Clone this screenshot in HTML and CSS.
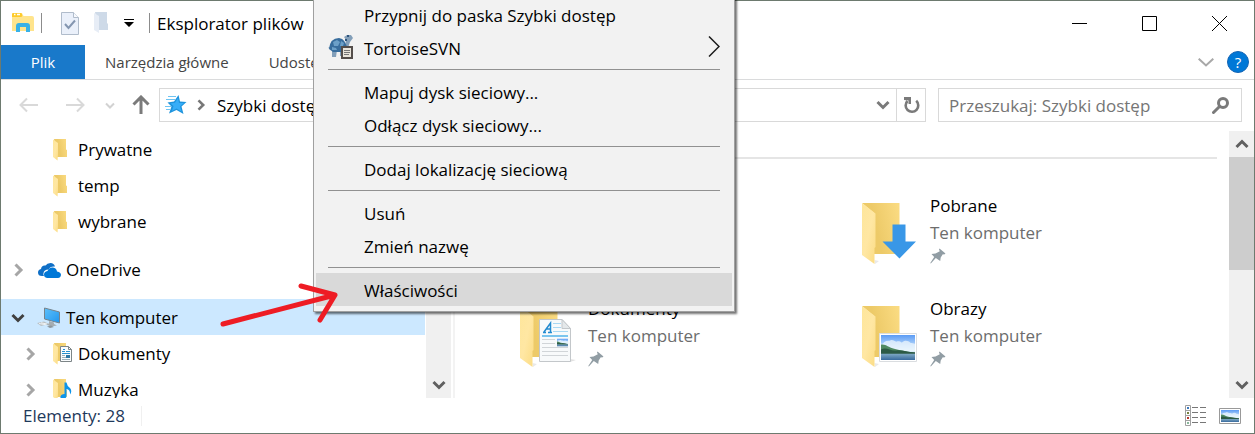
FILE: index.html
```html
<!DOCTYPE html>
<html lang="pl">
<head>
<meta charset="utf-8">
<title>Eksplorator plików</title>
<link rel="stylesheet" href="styles.css">
</head>
<body>
<svg class="defs" width="0" height="0" aria-hidden="true">
  <defs>
    <linearGradient id="g-back" x1="0" x2="1" y1="0.3" y2="0"><stop offset="0.3" stop-color="#edca68"/><stop offset="1" stop-color="#fbdc83"/></linearGradient>
    <linearGradient id="g-front" x1="0" x2="1" y1="0" y2="1"><stop offset="0" stop-color="#fee69b"/><stop offset="0.5" stop-color="#ffe7a3"/><stop offset="1" stop-color="#fbdc84"/></linearGradient>
    <linearGradient id="g-sky" x1="0" x2="0" y1="0" y2="1"><stop offset="0" stop-color="#5b9bf5"/><stop offset="0.6" stop-color="#d8eefb"/></linearGradient>
    <linearGradient id="g-sea" x1="0" x2="0" y1="0" y2="1"><stop offset="0" stop-color="#7fa9c4"/><stop offset="1" stop-color="#386a9d"/></linearGradient>
    <linearGradient id="g-screen" x1="0" x2="1" y1="0" y2="1"><stop offset="0" stop-color="#5dc0fb"/><stop offset="1" stop-color="#2196ee"/></linearGradient>
    <symbol id="folder-small" viewBox="0 0 14 22">
      <path d="M1 0H13V10.500L14 11V18H4Z" fill="url(#g-back)"/>
      <path d="M0 0.500 5 4V15L4.500 21.500 0 18Z" fill="url(#g-front)"/>
    </symbol>
    <symbol id="folder-big" viewBox="0 0 38 62">
      <path d="M0 0H37.500V51H12V10Z" fill="url(#g-back)"/>
      <path d="M12.500 57 17 58 13 61Z" fill="#e9e9e9"/>
      <path d="M0 0 13.500 10.500V44L12.500 45V61L0 52Z" fill="url(#g-front)"/>
    </symbol>
    <symbol id="landscape" viewBox="0 0 36 26" preserveAspectRatio="none">
      <path d="M0 0H36V26H0Z" fill="url(#g-sky)"/>
      <path d="M2 9c2-3 5-3 7-3 2-2 6 0 7 1 3-1 5 0 6 1 3-3 7-2 9 0l5 1v8H0V9Z" fill="#eef7fd" opacity=".75"/>
      <path d="M0 10C5 9 8 13 13 14S24 17 36 18.500V20H0Z" fill="#4f8a62"/>
      <path d="M0 15C6 12 10 17 16 16S28 18 36 18V20H0Z" fill="#2c5a45"/>
      <path d="M0 19.500H36V26H0Z" fill="url(#g-sea)"/>
    </symbol>
    <symbol id="pin" viewBox="0 0 16 16">
      <path d="M9.500 0.500 15.500 5.500 14.200 6.500 12.800 6.300 10.700 9.500 10.200 13 5.800 9.900 0.800 15.600 0.300 15.100 4.200 9 1.500 6 5.500 5.600 9.800 3.200 9 1.500Z" fill="#919da4"/>
    </symbol>
    <symbol id="chev-right" viewBox="0 0 10 14"><path d="M1.500 1.500 7 7 1.500 12.500" fill="none" stroke="currentColor" stroke-width="3"/></symbol>
    <symbol id="chev-down" viewBox="0 0 14 10"><path d="M1.500 2 7 7.500 12.500 2" fill="none" stroke="currentColor" stroke-width="3"/></symbol>
  </defs>
</svg>

<div class="window">
  <header class="titlebar">
    <div class="quick-access">
      <svg class="app-icon" width="22" height="20" viewBox="0 0 22 20"><path d="M0 2H10L12 3H20Q22 3 22 5V18H0Z" fill="#ffe48c"/><path d="M1 0H9Q10.500 0 10.500 2T9 4H0V1Q0 0 1 0Z" fill="#fecb2b"/><path d="M2 1.500H3.500M5 1.500H8" stroke="#fff" stroke-width="1.500"/><path d="M4 19V13Q4 10 7 10H15Q18 10 18 13V19H14V14H8V19Z" fill="#38b1e7"/></svg>
      <span class="divider"></span>
      <button class="tool" aria-label="Właściwości folderu"><svg width="18" height="23" viewBox="0 0 18 23"><path d="M.5.500H12.500L17.500 5.500V22.500H.5Z" fill="#eaf0fa" stroke="#b0bccb"/><path d="M12.500.500V5.500H17.500" fill="#f7f9fd" stroke="#b0bccb"/><path d="M4 12 7.500 16 14 8.500" fill="none" stroke="#8496b0" stroke-width="2"/></svg></button>
      <button class="tool tool-folder" aria-label="Nowy folder"><svg width="15" height="22" viewBox="0 0 15 22"><path d="M1 0H13V11L14 12V18H4Z" fill="#cedae8"/><path d="M0 1 5 4V21L0 18Z" fill="#e7edf6"/></svg></button>
      <button class="tool" aria-label="Dostosuj pasek"><svg width="10" height="8" viewBox="0 0 10 8"><path d="M0 0H10V1H0ZM0 3H10L5 8Z"/></svg></button>
      <span class="divider"></span>
    </div>
    <h1 class="title">Eksplorator plików</h1>
    <div class="window-buttons">
      <button aria-label="Minimalizuj"><svg width="15" height="15" viewBox="0 0 15 15"><path d="M0 7.500H15" stroke="#000"/></svg></button>
      <button aria-label="Maksymalizuj"><svg width="15" height="15" viewBox="0 0 15 15"><path d="M.5.500H14.500V14.500H.5Z" fill="none" stroke="#000"/></svg></button>
      <button aria-label="Zamknij"><svg width="15" height="15" viewBox="0 0 15 15"><path d="M0 0 15 15M15 0 0 15" stroke="#000"/></svg></button>
    </div>
  </header>

  <nav class="ribbon">
    <button class="file-tab">Plik</button>
    <button class="tab">Narzędzia główne</button>
    <button class="tab">Udostępnianie</button>
    <span class="spacer"></span>
    <button class="expand" aria-label="Rozwiń wstążkę"><svg width="16" height="9" viewBox="0 0 16 9"><path d="M.7.700 8 7.500 15.300.700" fill="none" stroke="#a8a8a8" stroke-width="2"/></svg></button>
    <button class="help" aria-label="Pomoc">?</button>
  </nav>

  <div class="navbar">
    <div class="nav-buttons">
      <button aria-label="Wstecz"><svg width="20" height="16" viewBox="0 0 20 16"><path d="M19 8H2M8 1.500 1.500 8 8 14.500" fill="none" stroke="#d9d9d9" stroke-width="2"/></svg></button>
      <button aria-label="Dalej"><svg width="20" height="16" viewBox="0 0 20 16"><path d="M1 8H18M12 1.500 18.500 8 12 14.500" fill="none" stroke="#d9d9d9" stroke-width="2"/></svg></button>
      <button class="recent" aria-label="Ostatnie"><svg width="10" height="7" viewBox="0 0 10 7"><path d="M1 1.500 5 5.500 9 1.500" fill="none" stroke="#d2d2d2" stroke-width="2"/></svg></button>
      <button class="up" aria-label="W górę"><svg width="18" height="20" viewBox="0 0 18 20"><path d="M9 19V3M1.500 9.500 9 2 16.500 9.500" fill="none" stroke="#7b7b7b" stroke-width="3"/></svg></button>
    </div>
    <div class="address">
      <svg class="star" width="22" height="20" viewBox="0 0 22 20"><path d="M13.500 0 15 6.500 21.500 7 16.500 11.500 18.500 19 11.500 15 4 18.500 6.500 11.500 2.500 7.500 9 6.500Z" fill="#1e93dc"/><path d="M13 3 14 8 19 8 15 11.500 16.500 16.500 11.500 13.500 7 16 8.500 11 5.500 8.500 10 7.800Z" fill="#36adf8"/><path d="M3 1.500H11M1 4.500H10M0 11.500H6M1 14.500H5" stroke="#6fc4f2"/></svg>
      <svg class="crumb-arrow" width="9" height="12"><use href="#chev-right"/></svg>
      <span class="crumb">Szybki dostęp</span>
      <button class="history" aria-label="Poprzednie lokalizacje"><svg width="14" height="10"><use href="#chev-down"/></svg></button>
      <button class="refresh" aria-label="Odśwież"><svg width="17" height="17" viewBox="0 0 17 17"><path d="M13.200 3.800A6.300 6.300 0 1 1 4.500 4" fill="none" stroke="#7a7a7a" stroke-width="2.600"/><path d="M1 0H8V7H5.500V3.500L1 3Z" fill="#7a7a7a"/></svg></button>
    </div>
    <label class="search">
      <input type="text" placeholder="Przeszukaj: Szybki dostęp" aria-label="Przeszukaj">
      <svg width="17" height="17" viewBox="0 0 17 17"><circle cx="11" cy="6" r="4.500" fill="none" stroke="#7a7a7a" stroke-width="3"/><path d="M7.500 9.500 1.500 15.500" stroke="#7a7a7a" stroke-width="3" stroke-linecap="round"/></svg>
    </label>
  </div>

  <div class="body">
    <aside class="sidebar">
      <ul class="tree">
        <li class="row child"><svg class="folder" width="14" height="22"><use href="#folder-small"/></svg>Prywatne</li>
        <li class="row child"><svg class="folder" width="14" height="22"><use href="#folder-small"/></svg>temp</li>
        <li class="row child"><svg class="folder" width="14" height="22"><use href="#folder-small"/></svg>wybrane</li>
        <li class="row root"><svg class="toggle" width="10" height="14"><use href="#chev-right"/></svg>
          <svg class="drive" width="23" height="15" viewBox="0 0 23 15"><path d="M4 13Q0 13 0 9.500 0 6.500 3 6 3.500 2 7.500 2.500 9 0 12.500 0T17 3.500Q12 3 10.500 6.500 6 6.500 5.500 10 5 12 6 13Z" fill="#0f6fc6"/><path d="M9 15Q6 14.500 6 11.500T9.500 8Q11 4 15 4.500 18.500 5 19 8.500 23 9 23 12 22.500 15 20 15Z" fill="#0078d7"/></svg>OneDrive</li>
        <li class="row root selected"><svg class="toggle open" width="14" height="10"><use href="#chev-down"/></svg>
          <svg class="computer" width="24" height="22" viewBox="0 0 24 22"><path d="M7.500 1 22.500 5V16L7.500 12Z" fill="url(#g-screen)" stroke="#76838c"/><path d="M12 14 17 15.500V17L20 18.500 14 19.500 9 17.500 12 16.500Z" fill="#a6adb1"/><path d="M0 16 7 14.500 12 17 4 19Z" fill="#b9bfc3"/><path d="M2 16.500 9 17.800M4 15.800 10 17" stroke="#eef2f4"/><path d="M10 19.500 14 18.500 17 20 13 21Z" fill="#8d969c"/></svg>Ten komputer</li>
        <li class="row child"><svg class="toggle" width="10" height="14"><use href="#chev-right"/></svg>
          <svg class="folder-file" width="20" height="22" viewBox="0 0 20 22"><use href="#folder-small" width="14" height="22"/><path d="M7.500 3.500H15.500L18.500 6.500V18.500H7.500Z" fill="#fafcfd" stroke="#7d8587"/><path d="M15.500 3.500V6.500H18.500" fill="none" stroke="#7d8587"/><path d="M9 8.500H12M10 6.500H12M13 8.500H17M9 10.500H17" stroke="#2790cf"/><path d="M9 12.500H12M9 14.500H17M9 16.500H17" stroke="#9cb0bb"/><path d="M13 12H17V15H13Z" fill="#2d77a5"/></svg>Dokumenty</li>
        <li class="row child"><svg class="toggle" width="10" height="14"><use href="#chev-right"/></svg>
          <svg class="folder-file" width="20" height="22" viewBox="0 0 20 22"><use href="#folder-small" width="14" height="22"/><path d="M11.500 3.500H13.500Q14 7 17 9 19.500 12 17 15.500 17.500 11 13.500 10V17Q13 20 10 20T7.500 17.500Q8 15 11.500 15Z" fill="#0d94ea"/></svg>Muzyka</li>
      </ul>
      <div class="scrollbar side-scroll"><svg width="14" height="10"><use href="#chev-down"/></svg></div>
    </aside>
    <main class="content">
      <hr class="group-line">
      <div class="tiles">
        <article class="tile downloads">
          <svg class="picture" width="58" height="62" viewBox="0 0 58 62"><use href="#folder-big" width="38" height="62"/><path d="M30.500 21.500H43.500V38.500H54L37.500 55.500 20.500 38.500H30.500Z" fill="#3997e7"/></svg>
          <div><h2>Pobrane</h2><p>Ten komputer</p><svg class="pin" width="16" height="16"><use href="#pin"/></svg></div>
        </article>
        <article class="tile documents">
          <svg class="picture" width="58" height="62" viewBox="0 0 58 62"><use href="#folder-big" width="38" height="62"/><path d="M50 53 56 54 50 56Z" fill="#e2e2e2"/><path d="M19.500 13.500H42L50.500 22.500V55.500H19.500Z" fill="#f8fafb" stroke="#c3c7ca"/><path d="M42 13.500V22.500H50.500Z" fill="#e4e8ea" stroke="#c3c7ca"/><path d="M33 17.500H41M33 21.500H41M33 25.500H48" stroke="#a9d8f3"/><path d="M22 30H48" stroke="#7bc5ee" stroke-width="2"/><path d="M22 33.500H35M22 37.500H35M22 41.500H48M22 45.500H48M22 49.500H48" stroke="#d1d5d8"/><path d="M23 26.500H26M24 26 30.500 17V26M26 23H30M28 26.500H32" fill="none" stroke="#238bd0" stroke-width="1.500"/><use href="#landscape" x="37" y="32.500" width="11" height="8"/></svg>
          <div><h2>Dokumenty</h2><p>Ten komputer</p><svg class="pin" width="16" height="16"><use href="#pin"/></svg></div>
        </article>
        <article class="tile pictures">
          <svg class="picture" width="58" height="62" viewBox="0 0 58 62"><use href="#folder-big" width="38" height="62"/><path d="M17.500 27.500H54.500V55.500H17.500Z" fill="#fff" stroke="#dadde0"/><use href="#landscape" x="19" y="29" width="34" height="25"/></svg>
          <div><h2>Obrazy</h2><p>Ten komputer</p><svg class="pin" width="16" height="16"><use href="#pin"/></svg></div>
        </article>
      </div>
    </main>
    <div class="scrollbar main-scroll">
      <svg class="flip" width="14" height="10"><use href="#chev-down"/></svg>
      <span class="thumb"></span>
      <svg width="14" height="10"><use href="#chev-down"/></svg>
    </div>
  </div>

  <footer class="status">
    <span class="count">Elementy: 28</span>
    <span class="spacer"></span>
    <button aria-label="Szczegóły"><svg width="22" height="21" viewBox="0 0 22 21"><path d="M.5.500H5.500V20.500H.5ZM.5 5.500H5.500M.5 10.500H5.500M.5 15.500H5.500" fill="#fff" stroke="#a0a0a0"/><path d="M2 2H4V4H2Z" fill="#3c78bd"/><path d="M2 7H4V9H2Z" fill="#74813e"/><path d="M2 12H4V14H2Z" fill="#b8362b"/><path d="M2 17H4V19H2Z" fill="#88b79b"/><path d="M7 2.500H13M15 2.500H21M7 7.500H13M15 7.500H21M7 12.500H13M15 12.500H21M7 17.500H13M15 17.500H21" stroke="#777"/></svg></button>
    <button aria-label="Duże ikony"><svg width="22" height="16" viewBox="0 0 22 16"><path d="M.5.500H21.500V15.500H.5Z" fill="#fff" stroke="#999"/><use href="#landscape" x="2" y="2" width="18" height="12"/></svg></button>
  </footer>
</div>

<div class="menu" role="menu">
  <button role="menuitem">Przypnij do paska Szybki dostęp</button>
  <button role="menuitem">
    <svg class="tortoise" width="26" height="26" viewBox="0 0 26 26"><path d="M3 15 0 14 3 12ZM4 16H9L8 23H4ZM12 17H17V22H12ZM17 12 18 6 16 3 19 1H23L25 4 22 8 20 14Z" fill="#839fb9"/><path d="M1 15Q2 4 11 4 18 5 19 15L15 18H5Z" fill="#386d9d"/><path d="M5 8 9 6 12 8 10 12 6 12ZM13 7 16 9 15 12 12 12ZM4 13 8 14 9 16H4Z" fill="#6ca0c8"/><path d="M19 1H21V3H19ZM17 5H19V7H17Z" fill="#2f557c"/><path d="M14 13H24V24H14Z" fill="#e9e5dc" stroke="#544e4b" stroke-width="2"/><path d="M16 16.500H22M16 18.500H22M16 20.500H21" stroke="#777"/></svg>
    TortoiseSVN
    <svg class="submenu" width="12" height="21" viewBox="0 0 12 21"><path d="M1 .500 11 10.500 1 20.500" fill="none" stroke="#1b1b1b" stroke-width="1.500"/></svg>
  </button>
  <hr>
  <button role="menuitem">Mapuj dysk sieciowy...</button>
  <button role="menuitem">Odłącz dysk sieciowy...</button>
  <hr>
  <button role="menuitem">Dodaj lokalizację sieciową</button>
  <hr>
  <button role="menuitem">Usuń</button>
  <button role="menuitem">Zmień nazwę</button>
  <hr>
  <button role="menuitem" class="active">Właściwości</button>
</div>

<svg class="pointer" width="124" height="48" viewBox="0 0 124 48" aria-hidden="true"><path d="M5 43 117 14M83 5 117 14 102 39" fill="none" stroke="#ee1c24" stroke-width="5" stroke-linecap="round" stroke-linejoin="round"/></svg>
</body>
</html>
```

FILE: styles.css
```css
* { box-sizing: border-box; }

body {
  margin: 0;
  position: relative;
  background: #fff;
  color: #000;
  font: 17px/24px "Open Sans", "Noto Sans", sans-serif;
}

h1, h2, p, ul, hr { margin: 0; padding: 0; font-size: inherit; font-weight: 400; }
ul { list-style: none; }
svg { display: block; flex: none; }
.defs { position: absolute; }

button {
  padding: 0;
  border: 0;
  background: none;
  color: inherit;
  font: inherit;
  display: flex;
  align-items: center;
  justify-content: center;
}

.spacer { flex: 1; }

.window {
  height: 100vh;
  display: flex;
  flex-direction: column;
  border: 1px solid #6d7a6f;
}

/* Title bar */
.titlebar { display: flex; height: 44px; flex: none; }
.quick-access { display: flex; align-items: center; padding-left: 11px; }
.divider { width: 1px; height: 20px; background: #8c8c8c; }
.app-icon { margin-right: 7px; }
.tool { margin-left: 15px; }
.divider + .tool { margin-left: 19px; }
.tool + .divider { margin-left: 15px; }
.title { align-self: center; margin-left: 7px; padding-top: 2px; white-space: nowrap; }
.window-buttons { display: flex; margin-left: auto; }
.window-buttons button { width: 70px; }

/* Ribbon */
.ribbon {
  display: flex;
  align-items: center;
  flex: none;
  height: 35px;
  border-bottom: 1px solid #dadbdc;
  font-size: 15px;
}
.file-tab { width: 84px; height: 34px; background: #1979ca; color: #fff; }
.tab { padding: 0 20px; color: #444; white-space: nowrap; }
.expand { margin-right: 13px; }
.help {
  width: 22px;
  height: 22px;
  margin-right: 5px;
  border: 1px solid #1565b5;
  border-radius: 50%;
  background: #0078d7;
  color: #fff;
}

/* Address row */
.navbar { display: flex; flex: none; padding: 8px 12px 9px 18px; }
.nav-buttons { display: flex; align-items: center; width: 140px; }
.nav-buttons button + button { margin-left: 26px; }
.nav-buttons .recent { margin-left: 20px; }
.nav-buttons button + .up { margin-left: 17px; }
.address, .search { display: flex; align-items: center; height: 34px; border: 1px solid #d9d9d9; }
.address { flex: 5; }
.star { margin-left: 5px; }
.crumb-arrow { margin: 0 11px 0 10px; color: #777; }
.crumb { padding-top: 2px; }
.history { margin-left: auto; width: 26px; height: 32px; color: #7a7a7a; }
.refresh { width: 29px; height: 32px; border-left: 1px solid #d9d9d9; }
.search { flex: 0 0 304px; margin-left: 12px; padding: 0 12px 0 10px; }
.search input {
  flex: 1;
  min-width: 0;
  padding: 2px 0 0;
  border: 0;
  outline: 0;
  background: none;
  font: inherit;
}
.search input::placeholder { color: #757575; opacity: 1; }

/* Body */
.body { display: flex; flex: 1; min-height: 0; overflow: hidden; }
.sidebar { display: flex; flex: 0 0 454px; border-right: 2px solid #f3f3f3; }
.tree { flex: 1; overflow: hidden; }
.row { display: flex; align-items: center; height: 36px; padding-top: 2px; }
.toggle { color: #a6a6a6; }
.toggle.open { color: #404040; }
.root { margin-top: 12px; padding-left: 13px; }
.root + .child { margin-top: 0; }
.root .toggle { margin-right: 14px; }
.root .open { margin: 0 12px 0 -3px; }
.selected { background: #cce8ff; }
.child { padding-left: 25px; }
.folder { margin: 0 11px 0 27px; }
.child .toggle { margin-right: 17px; }
.folder-file { margin-right: 5px; }
.drive { margin-right: 5px; }
.computer { margin-right: 5px; }

.scrollbar {
  display: flex;
  flex-direction: column;
  align-items: center;
  flex: none;
  width: 25px;
  padding: 8px 0;
  background: #f0f0f0;
  color: #606060;
}
.side-scroll { justify-content: flex-end; margin: 0 2px 0 1px; }
.main-scroll { justify-content: space-between; }
.flip { transform: rotate(180deg); }
.thumb { width: 25px; height: 113px; margin: 8px 0 auto; background: #cdcdcd; }

.content { flex: 1; min-width: 0; padding: 26px 12px 0 65px; }
.group-line { height: 2px; margin-left: -50px; border: 0; background: #e5e5e5; }
.tiles {
  display: grid;
  grid-template-columns: 342px 342px;
  grid-auto-rows: 103px;
  padding-top: 34px;
}
.tile { display: flex; }
.downloads, .pictures { grid-column: 2; }
.documents { grid-column: 1; }
.tile h2, .tile p { height: 27px; line-height: 25px; }
.tile p { color: #6d6d6d; }
.tile .picture { margin: 10px 10px 0 0; }
.pin { margin-top: 1px; }

/* Status bar */
.status {
  display: flex;
  align-items: center;
  flex: none;
  height: 35px;
  padding: 0 13px 0 22px;
  color: #1e395b;
}
.count { padding-right: 16px; border-right: 1px solid #f0f0f0; line-height: 20px; }
.status button + button { margin-left: 12px; }

/* Context menu */
.menu {
  position: absolute;
  top: -5px;
  left: 313px;
  width: 422px;
  padding: 2px 2px 5px;
  border: 1px solid #a0a0a0;
  background: #f2f2f2;
  box-shadow: 2px 2px 2px rgba(0, 0, 0, .55);
}
.menu button {
  position: relative;
  justify-content: flex-start;
  width: 100%;
  height: 33px;
  padding: 2px 0 0 48px;
}
.menu .active { background: #d9d9d9; }
.menu hr { height: 1px; margin: 5px 12px; border: 0; background: #919191; }
.tortoise { position: absolute; left: 12px; top: 3px; }
.submenu { margin: 0 12px 4px auto; }

/* Hand-drawn arrow */
.pointer { position: absolute; left: 218px; top: 281px; }
```
